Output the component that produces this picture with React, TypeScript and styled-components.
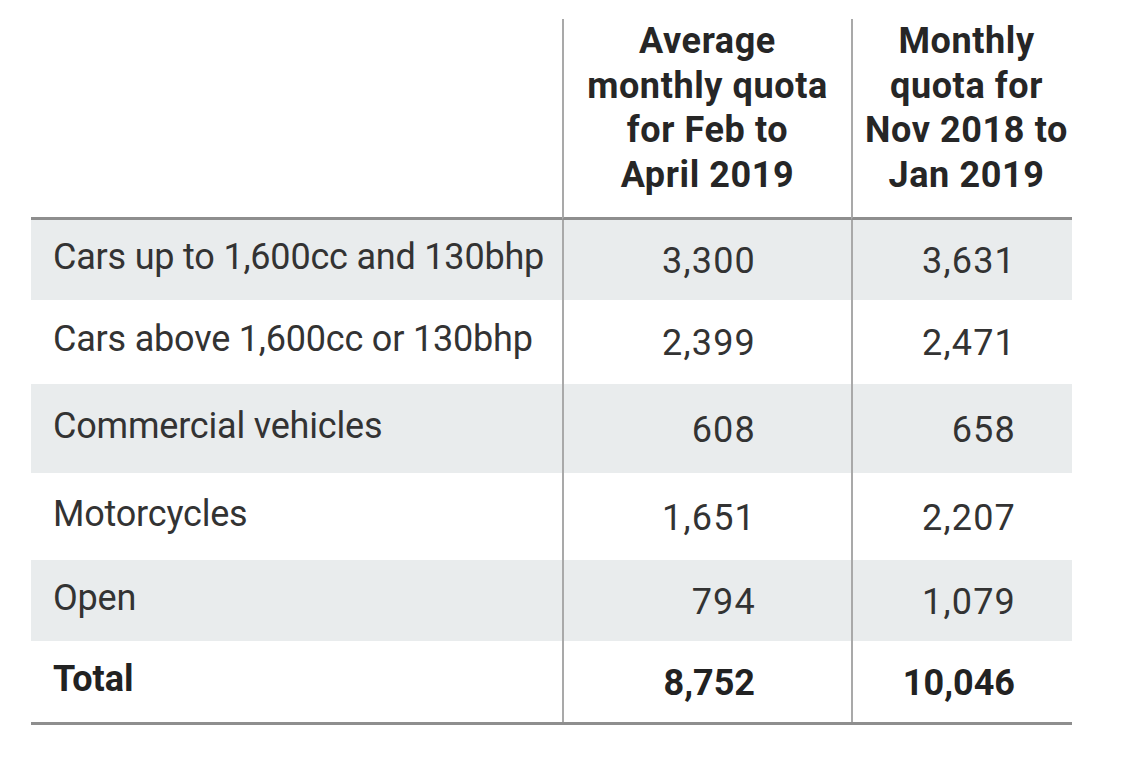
import React from "react";
import styled, { createGlobalStyle } from "styled-components";

const Global = createGlobalStyle`
  html, body {
    margin: 0;
    padding: 0;
    background: #ffffff;
  }
  body {
    font-family: Roboto, "Liberation Sans", sans-serif;
    color: #2d2d2d;
  }
`;

const Page = styled.div`
  padding: 19px 0 0 31px;
`;

const Table = styled.div`
  display: grid;
  grid-template-columns: 531px 289px 221px;
  width: 1041px;
  border-bottom: 3px solid #8e8e8e;
`;

const HeadCell = styled.div<{ $line?: boolean; $shift?: number }>`
  height: 201px;
  box-sizing: border-box;
  border-left: ${(p) => (p.$line ? "2px solid #a9a9a9" : "none")};
  border-bottom: 3px solid #8e8e8e;
  padding-left: ${(p) => p.$shift ?? 0}px;
  font-size: 36px;
  font-weight: 700;
  line-height: 44.6px;
  text-align: center;
  letter-spacing: 0.6px;
  color: #262626;
`;

const Cell = styled.div<{ $line?: boolean; $shade?: boolean; $num?: boolean; $pad?: number; $bold?: boolean; $h: number }>`
  height: ${(p) => p.$h}px;
  box-sizing: border-box;
  display: flex;
  align-items: center;
  justify-content: ${(p) => (p.$num ? "flex-end" : "flex-start")};
  padding: ${(p) => (p.$num ? `2px ${p.$pad ?? 0}px 0 0` : "0 0 6px 22px")};
  background: ${(p) => (p.$shade ? "#e9eced" : "#ffffff")};
  border-left: ${(p) => (p.$line ? "2px solid #a9a9a9" : "none")};
  font-size: 36px;
  font-weight: ${(p) => (p.$bold ? 700 : 400)};
  letter-spacing: ${(p) => (p.$bold ? "0" : p.$num ? "1.2px" : "-0.2px")};
  color: ${(p) => (p.$bold ? "#222222" : "#333333")};
`;

type Row = { label: string; a: string; b: string; h: number; bold?: boolean };

const rows: Row[] = [
  { label: "Cars up to 1,600cc and 130bhp", a: "3,300", b: "3,631", h: 80 },
  { label: "Cars above 1,600cc or 130bhp", a: "2,399", b: "2,471", h: 84 },
  { label: "Commercial vehicles", a: "608", b: "658", h: 89 },
  { label: "Motorcycles", a: "1,651", b: "2,207", h: 87 },
  { label: "Open", a: "794", b: "1,079", h: 81 },
  { label: "Total", a: "8,752", b: "10,046", h: 81, bold: true },
];

export default function App() {
  return (
    <Page>
      <Global />
      <Table>
        <HeadCell />
        <HeadCell $line>
          Average
          <br />
          monthly quota
          <br />
          for Feb to
          <br />
          April 2019
        </HeadCell>
        <HeadCell $line $shift={8}>
          Monthly
          <br />
          quota for
          <br />
          Nov 2018 to
          <br />
          Jan 2019
        </HeadCell>
        {rows.map((r, i) => {
          const shade = i % 2 === 0 && !r.bold;
          return (
            <React.Fragment key={r.label}>
              <Cell $shade={shade} $bold={r.bold} $h={r.h}>
                {r.label}
              </Cell>
              <Cell $line $num $pad={r.bold ? 96 : 95} $shade={shade} $bold={r.bold} $h={r.h}>
                {r.a}
              </Cell>
              <Cell $line $num $pad={r.bold ? 57 : 56} $shade={shade} $bold={r.bold} $h={r.h}>
                {r.b}
              </Cell>
            </React.Fragment>
          );
        })}
      </Table>
    </Page>
  );
}
